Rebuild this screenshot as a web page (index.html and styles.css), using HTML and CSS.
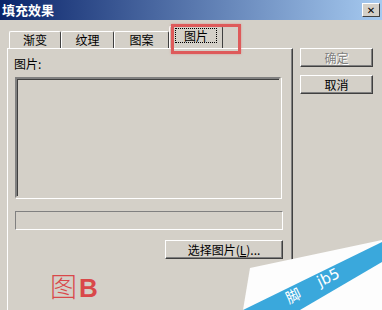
FILE: index.html
```html
<!DOCTYPE html>
<html>
<head>
    <meta http-equiv="Content-Type" content="text/html; charset=UTF-8">
    <link rel="stylesheet" href="styles.css">
</head>
<body>
    <div class="titlebar">
        <span class="title">填充效果</span>
        <span class="close">✕</span>
    </div>

    <div class="dialog">
        <div class="sheet">
            <div class="tabs">
                <div class="tab t1">渐变</div>
                <div class="tab t2">纹理</div>
                <div class="tab t3">图案</div>
                <div class="tab t4 selected"><span class="focus">图片</span></div>
            </div>
            <div class="panel">
                <div class="label">图片:</div>
                <div class="picture"></div>
                <div class="textbox"></div>
                <div class="btn pick">选择图片(<u>L</u>)...</div>
                <div class="mark">图<b>B</b></div>
            </div>
        </div>
        <div class="side">
            <div class="btn disabled">确定</div>
            <div class="btn">取消</div>
        </div>
    </div>

    <!-- annotation overlays -->
    <div class="highlight"></div>
    <svg class="watermark" width="382" height="310" viewBox="0 0 382 310">
        <polygon points="250,268 382,240 382,310 243,310" fill="#fdfdfd"/>
        <polygon points="382,242 382,262 300,310 243,310" fill="#3aa8dc"/>
        <text x="289" y="304" transform="rotate(-26 289 304)" fill="#fff" font-size="15" font-family="Noto Sans CJK SC, sans-serif">脚</text>
        <text x="320" y="287" transform="rotate(-26 320 287)" fill="#fff" font-size="15" font-family="DejaVu Sans, sans-serif">jb5</text>
    </svg>
</body>
</html>
```

FILE: styles.css
```css
body {
    margin: 0;
    width: 382px;
    height: 310px;
    overflow: hidden;
    position: relative;
    background-color: #d4d0c8;
    font-family: "Noto Sans CJK SC", sans-serif;
    font-size: 12px;
    color: #000;
}

.titlebar {
    height: 20px;
    display: flex;
    align-items: center;
    justify-content: space-between;
    padding: 0 2px 0 2px;
    background: linear-gradient(to right, #0a246a, #a6caf0);
}

.title {
    color: #fff;
    font-weight: bold;
    font-size: 13px;
    line-height: 20px;
}

.close {
    width: 16px;
    height: 12px;
    display: flex;
    align-items: center;
    justify-content: center;
    background-color: #d4d0c8;
    border: 1px solid;
    border-color: #fff #404040 #404040 #fff;
    font-family: "DejaVu Sans", sans-serif;
    font-size: 10px;
    font-weight: bold;
}

.dialog {
    display: flex;
    padding: 6px 0 0 7px;
}

.sheet {
    width: 286px;
    display: flex;
    flex-direction: column;
}

.tabs {
    display: flex;
    align-items: flex-end;
    height: 22px;
    padding-left: 2px;
}

.tab {
    height: 17px;
    box-sizing: border-box;
    border: 1px solid;
    border-color: #fff #404040 transparent #fff;
    border-bottom: none;
    border-radius: 2px 2px 0 0;
    display: flex;
    align-items: center;
    justify-content: center;
    line-height: 14px;
}

.t1 { width: 52px; }
.t2 { width: 53px; }
.t3 { width: 55px; }
.t4 { width: 54px; }

.tab.selected {
    height: 22px;
    padding-bottom: 4px;
}

.focus {
    border: 1px dotted #000;
    padding: 0 8px;
    line-height: 13px;
}

.panel {
    height: 262px;
    box-sizing: border-box;
    border-left: 1px solid #fff;
    border-top: 1px solid #fff;
    border-right: 1px solid #404040;
    box-shadow: inset -1px 0 #808080;
    padding: 8px 9px 0 7px;
    display: flex;
    flex-direction: column;
}

.label {
    margin-left: -1px;
    line-height: 14px;
}

.picture {
    margin-top: 6px;
    width: 262px;
    height: 117px;
    border: 2px solid;
    border-color: #808080 #d4d0c8 #d4d0c8 #808080;
    box-shadow: inset 1px 1px #404040, 1px 1px #fff;
}

.textbox {
    margin-top: 13px;
    height: 17px;
    border: 1px solid;
    border-color: #808080 #fff #fff #808080;
}

.btn {
    height: 19px;
    box-sizing: border-box;
    border: 1px solid;
    border-color: #fff #404040 #404040 #fff;
    box-shadow: inset -1px -1px #808080;
    display: flex;
    align-items: center;
    justify-content: center;
    line-height: 14px;
}

.btn u {
    text-decoration: underline;
}

.pick {
    margin-top: 10px;
    width: 118px;
    align-self: flex-end;
}

.mark {
    margin: 12px 0 0 35px;
    color: #d9484a;
    font-size: 27px;
    line-height: 30px;
    font-weight: 300;
}

.mark b {
    font-family: "Liberation Sans", sans-serif;
    font-weight: bold;
    font-size: 26px;
    margin-left: 2px;
}

.side {
    margin-left: 7px;
    width: 73px;
    padding-top: 22px;
    display: flex;
    flex-direction: column;
    gap: 8px;
}

.btn.disabled {
    color: #808080;
    text-shadow: 1px 1px #fff;
}

.highlight {
    position: absolute;
    left: 171px;
    top: 24px;
    width: 64px;
    height: 24px;
    border: 3px solid #de5a5a;
    box-shadow: 0 0 2px rgba(222, 90, 90, 0.5);
}

.watermark {
    position: absolute;
    left: 0;
    top: 0;
    pointer-events: none;
}
```
